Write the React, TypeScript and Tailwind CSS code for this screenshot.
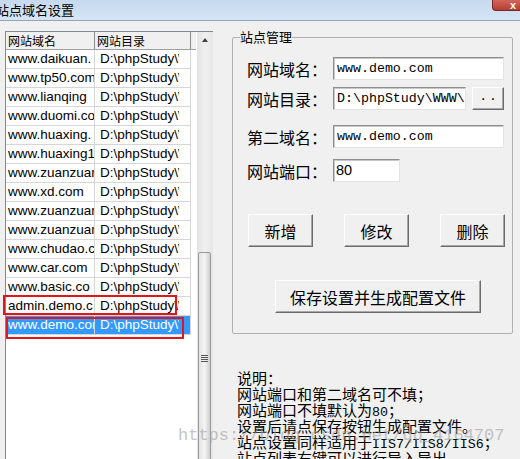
import React from "react"

const cjk = { fontFamily: "'Noto Sans CJK SC', 'Noto Sans', sans-serif" }
const sans = { fontFamily: "'Liberation Sans', Arial, sans-serif" }
const mono = { fontFamily: "'Liberation Mono', 'Courier New', monospace" }

const sites = [
  "www.daikuan.",
  "www.tp50.com",
  "www.lianqing",
  "www.duomi.co",
  "www.huaxing.",
  "www.huaxing1",
  "www.zuanzuan",
  "www.xd.com",
  "www.zuanzuan",
  "www.zuanzuan",
  "www.chudao.c",
  "www.car.com",
  "www.basic.co",
  "admin.demo.c",
  "www.demo.com",
]

const notes = [
  "说明：",
  "网站端口和第二域名可不填；",
  ["网站端口不填默认为", "80", "；"],
  "设置后请点保存按钮生成配置文件。",
  ["站点设置同样适用于", "IIS7/IIS8/IIS6", "；"],
  "站点列表右键可以进行导入导出",
]

function TitleBar() {
  return (
    <div className="relative h-[21px] border-b border-[#93a4b8] bg-gradient-to-b from-[#c6d9ef] to-[#d6e5f6]">
      <span className="-ml-[4px] block pt-[1px] text-[13px] leading-[18px] text-black" style={cjk}>
        站点域名设置
      </span>
      <div className="absolute right-0 top-0 flex h-[11px] w-[28px] items-end justify-end rounded-bl-[4px] border-b border-l border-[#7a2a22] bg-gradient-to-b from-[#d2655a] to-[#b83c2f] pr-[4px]">
        <span className="text-[11px] font-bold leading-[10px] text-white" style={sans}>x</span>
      </div>
    </div>
  )
}

function SiteList() {
  return (
    <div className="ml-[5px] mt-[10px] flex h-[440px] w-[208px] border-l border-t border-[#828790] bg-white">
      <div className="w-[191px]">
        <div className="flex h-[18px] border-b border-[#a0a0a0] bg-[#f0f0f0] text-[12px] leading-[17px] text-black" style={cjk}>
          <div className="w-[89px] border-r border-[#8a8a8a] pl-[2px]">网站域名</div>
          <div className="w-[96px] border-r border-[#8a8a8a] pl-[2px]">网站目录</div>
        </div>
        {sites.map((s, i) => {
          const sel = i === sites.length - 1
          return (
            <div
              key={i}
              className={
                sel
                  ? "flex h-[19px] w-[185px] border-b border-[#d6d6d6] bg-[#3399ff] text-[13.5px] leading-[18px] text-white"
                  : "flex h-[19px] w-[185px] border-b border-[#d6d6d6] text-[13.5px] leading-[18px] text-black"
              }
              style={sans}
            >
              <div className="w-[89px] overflow-hidden whitespace-nowrap border-r border-[#d6d6d6] pl-[2px]">{s}</div>
              <div className="w-[96px] border-r border-[#d6d6d6] pl-[5px]">
                <div className="w-[79px] overflow-hidden whitespace-nowrap">D:\phpStudy\WWW\</div>
              </div>
            </div>
          )
        })}
      </div>
      <div className="ml-[1px] flex w-[16px] flex-col bg-gradient-to-r from-[#e3e3e3] via-[#f0f0f0] to-[#e6e6e6]">
        <div className="flex h-[17px] items-center justify-center">
          <div className="h-0 w-0 border-x-[3.5px] border-b-[4px] border-x-transparent border-b-[#404040]" />
        </div>
        <div className="ml-[1px] mt-[204px] flex h-[230px] w-[13px] flex-col items-center rounded-[2px] border border-[#9a9a9a] bg-gradient-to-r from-[#e2e2e2] via-[#f4f4f4] to-[#cfcfcf]">
          <div className="mt-[102px] flex flex-col gap-[1px]">
            <div className="h-[1px] w-[7px] bg-[#555]" />
            <div className="h-[1px] w-[7px] bg-[#555]" />
            <div className="h-[1px] w-[7px] bg-[#555]" />
            <div className="h-[1px] w-[7px] bg-[#555]" />
          </div>
        </div>
      </div>
    </div>
  )
}

const inputCls =
  "h-[23px] overflow-hidden whitespace-nowrap border border-b-[#e3e3e3] border-l-[#8f8f8f] border-r-[#e3e3e3] border-t-[#8f8f8f] bg-white shadow-[inset_1px_1px_0_#c8c8c8] text-black"

const btnCls =
  "flex items-center justify-center border border-b-[#6b6b6b] border-l-white border-r-[#6b6b6b] border-t-white bg-[#f0f0f0] shadow-[inset_-1px_-1px_0_#a8a8a8] text-[16px] text-black"

function Field({ label, children, mt }: { label: string; children: React.ReactNode; mt: string }) {
  return (
    <div className={"flex items-center " + mt}>
      <div className="w-[86px] text-[16px] leading-[20px] text-black" style={cjk}>{label}</div>
      {children}
    </div>
  )
}

function SiteManager() {
  return (
    <fieldset className="h-[305px] w-[281px] rounded-[2px] border border-[#b0b0b0] p-0">
      <legend className="ml-[7px] p-0 text-[13px] leading-[16px] text-black" style={cjk}>站点管理</legend>
      <div className="pl-[14px]">
        <Field label="网站域名：" mt="mt-[12px]">
          <div className={inputCls + " w-[171px] pl-[3px] text-[13.3px] leading-[21px]"} style={mono}>www.demo.com</div>
        </Field>
        <Field label="网站目录：" mt="mt-[7px]">
          <div className={inputCls + " w-[133px] pl-[3px] text-[13.3px] leading-[21px]"} style={mono}>D:\phpStudy\WWW\</div>
          <div className={btnCls + " ml-[6px] h-[23px] w-[32px] text-[12px]"} style={sans}>· ·</div>
        </Field>
        <Field label="第二域名：" mt="mt-[15px]">
          <div className={inputCls + " w-[171px] pl-[3px] text-[13.3px] leading-[21px]"} style={mono}>www.demo.com</div>
        </Field>
        <Field label="网站端口：" mt="mt-[11px]">
          <div className={inputCls + " w-[67px] pl-[2px] text-[14.5px] leading-[21px]"} style={sans}>80</div>
        </Field>
        <div className="ml-[1px] mt-[32px] flex gap-[31px]" style={cjk}>
          <div className={btnCls + " h-[33px] w-[65px]"}>新增</div>
          <div className={btnCls + " h-[33px] w-[65px]"}>修改</div>
          <div className={btnCls + " h-[33px] w-[65px]"}>删除</div>
        </div>
        <div className={btnCls + " ml-[28px] mt-[33px] h-[33px] w-[206px]"} style={cjk}>保存设置并生成配置文件</div>
      </div>
    </fieldset>
  )
}

export default function App() {
  return (
    <div className="relative h-[459px] w-[520px] overflow-hidden bg-[#f0f0f0]">
      <TitleBar />
      <div className="flex items-start">
        <SiteList />
        <div className="ml-[19px] mt-[8px]">
          <SiteManager />
          <div className="ml-[5px] mt-[36px] whitespace-nowrap text-[15px] leading-[16px] text-black" style={cjk}>
            {notes.map((n, i) => (
              <div key={i} className="h-[16px]">
                {typeof n === "string" ? (
                  n
                ) : (
                  <>
                    {n[0]}
                    <span className="text-[13.3px] leading-[16px]" style={mono}>{n[1]}</span>
                    {n[2]}
                  </>
                )}
              </div>
            ))}
          </div>
        </div>
      </div>
      <div className="absolute left-[3px] top-[295px] h-[20px] w-[174px] border-2 border-[#e0161e]" />
      <div className="absolute left-[6px] top-[317px] h-[22px] w-[178px] border-2 border-[#e0161e]" />
      <div className="pointer-events-none absolute left-[178px] top-[425px] whitespace-nowrap text-[17px] leading-[22px] text-[#a0a0a0] opacity-60" style={mono}>
        https://blog.csdn.net/qq_4164707
      </div>
    </div>
  )
}
